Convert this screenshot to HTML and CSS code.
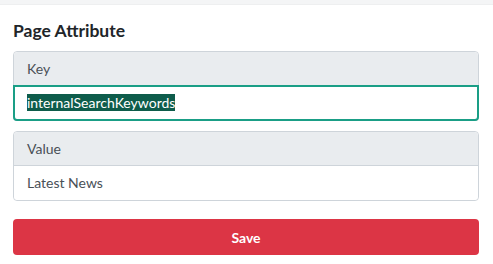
FILE: index.html
```html
<!DOCTYPE html>
<html lang="en">
<head>
    <meta charset="UTF-8">
    <meta name="viewport" content="width=device-width, initial-scale=1.0">
    <title>Page Attribute</title>
    <link rel="stylesheet" href="styles.css">
</head>
<body>
    <div class="topbar"></div>

    <div class="container">
        <h2>Page Attribute</h2>

        <div class="field">
            <div class="field-label">Key</div>
            <div class="field-input focused"><span class="selected">internalSearchKeywords</span></div>
        </div>

        <div class="field">
            <div class="field-label">Value</div>
            <div class="field-input">Latest News</div>
        </div>

        <button class="save-btn">Save</button>
    </div>
</body>
</html>
```

FILE: styles.css
```css
body {
    font-family: Lato, "Open Sans", sans-serif;
    margin: 0;
    background-color: #fff;
    color: #212529;
}
.topbar {
    height: 4px;
    background-color: #f4f5f6;
    border-bottom: 1px solid #eeeff0;
}
.container {
    padding: 0 14px 0 13px;
}
h2 {
    font-size: 17.5px;
    font-weight: bold;
    margin: 15px 0 9px 0;
    line-height: 22px;
}
.field {
    border: 1px solid #ced4da;
    border-radius: 4px;
    margin-bottom: 10px;
    font-size: 14px;
    color: #495057;
}
.field-label {
    background-color: #e9ecef;
    height: 33px;
    line-height: 33px;
    padding: 0 13px;
    border-bottom: 1px solid #ced4da;
    border-radius: 4px 4px 0 0;
}
.field-input {
    height: 34px;
    line-height: 34px;
    padding: 0 13px;
    background-color: #fff;
    border-radius: 0 0 4px 4px;
}
.field-input.focused {
    border: 2px solid #1a9e86;
    margin: -1px;
    padding: 0 12px;
    height: 32px;
    line-height: 32px;
    color: #333;
}
.selected {
    background-color: #0e5c4b;
    color: #fff;
}
.save-btn {
    display: block;
    width: 100%;
    height: 36px;
    margin-top: 18px;
    background-color: #dc3545;
    color: #fff;
    border: none;
    border-radius: 4px;
    font-family: inherit;
    font-size: 14px;
    font-weight: bold;
    cursor: pointer;
}
```
